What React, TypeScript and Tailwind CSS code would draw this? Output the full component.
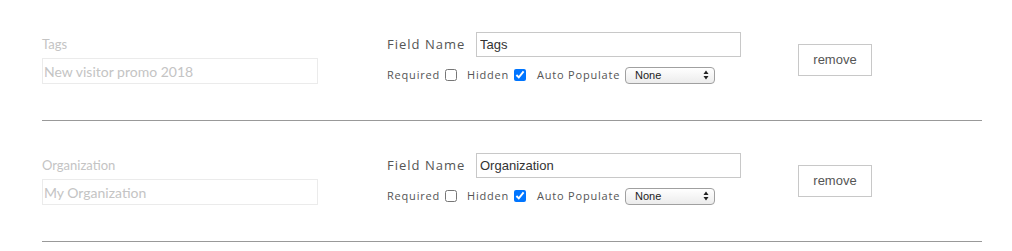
import { useState } from "react";

type Field = {
  id: number;
  label: string;
  placeholder: string;
  name: string;
  required: boolean;
  hidden: boolean;
  autoPopulate: string;
};

const initialFields: Field[] = [
  {
    id: 1,
    label: "Tags",
    placeholder: "New visitor promo 2018",
    name: "Tags",
    required: false,
    hidden: true,
    autoPopulate: "None",
  },
  {
    id: 2,
    label: "Organization",
    placeholder: "My Organization",
    name: "Organization",
    required: false,
    hidden: true,
    autoPopulate: "None",
  },
];

const raleway = "font-['Lato','Open_Sans',sans-serif]";
const sans = "font-['Open_Sans','Lato',sans-serif]";
const arial = "font-['Liberation_Sans',Arial,sans-serif]";

const SelectArrows = () => (
  <svg width="6" height="10" viewBox="0 0 6 10" className="shrink-0">
    <path d="M3 0.5 L5.5 4 L0.5 4 Z" fill="#222" />
    <path d="M3 9.5 L5.5 6 L0.5 6 Z" fill="#222" />
  </svg>
);

const FieldRow = ({
  field,
  onChange,
}: {
  field: Field;
  onChange: (f: Field) => void;
}) => {
  return (
    <div className="flex items-start h-[121px] pt-[32px] border-b border-[#999]">
      {/* Preview */}
      <div className="w-[345px] shrink-0">
        <div className={`${raleway} text-[13px] leading-[24px] text-[#c4c4c4]`}>
          {field.label}
        </div>
        <input
          type="text"
          placeholder={field.placeholder}
          className={`${raleway} mt-[2px] block w-[276px] h-[26px] px-[1px] border border-[#ebebeb] text-[14px] text-[#555] placeholder:text-[#c4c4c4] outline-none`}
        />
      </div>

      {/* Settings */}
      <div className="w-[354px] shrink-0">
        <div className="flex items-center h-[25px]">
          <span
            className={`${sans} w-[89px] text-[13px] tracking-[1px] text-[#555]`}
          >
            Field Name
          </span>
          <input
            type="text"
            value={field.name}
            onChange={(e) => onChange({ ...field, name: e.target.value })}
            className={`${arial} w-[265px] h-[25px] px-[3px] border border-[#c8c8c8] text-[13px] text-[#333] outline-none`}
          />
        </div>
        <div
          className={`${sans} flex items-center h-[18px] mt-[9px] text-[11px] tracking-[0.8px] text-[#555]`}
        >
          <span className="w-[54px]">Required</span>
          <input
            type="checkbox"
            checked={field.required}
            onChange={(e) =>
              onChange({ ...field, required: e.target.checked })
            }
            className="m-0 ml-[4px] w-[12px] h-[12px]"
          />
          <span className="ml-[10px] w-[43px]">Hidden</span>
          <input
            type="checkbox"
            checked={field.hidden}
            onChange={(e) => onChange({ ...field, hidden: e.target.checked })}
            className="m-0 ml-[4px] w-[12px] h-[12px]"
          />
          <span className="ml-[11px] w-[84px] whitespace-nowrap">Auto Populate</span>
          <div
            className={`${arial} ml-[4px] flex items-center justify-between w-[90px] h-[17px] pl-[9px] pr-[5px] rounded-[4px] border border-[#a0a0a0] bg-gradient-to-b from-white to-[#ececec] text-[11px] tracking-normal text-[#222]`}
          >
            <span>{field.autoPopulate}</span>
            <SelectArrows />
          </div>
        </div>
      </div>

      {/* Actions */}
      <button
        className={`${arial} ml-[57px] mt-[12px] w-[74px] h-[32px] border border-[#c8c8c8] bg-white text-[13px] text-[#555]`}
      >
        remove
      </button>
    </div>
  );
};

export default function App() {
  const [fields, setFields] = useState<Field[]>(initialFields);

  return (
    <div className="bg-white min-h-[251px] px-[42px] w-[1024px]">
      <div className="w-[940px]">
        {fields.map((f) => (
          <FieldRow
            key={f.id}
            field={f}
            onChange={(nf) =>
              setFields(fields.map((x) => (x.id === nf.id ? nf : x)))
            }
          />
        ))}
      </div>
    </div>
  );
}
